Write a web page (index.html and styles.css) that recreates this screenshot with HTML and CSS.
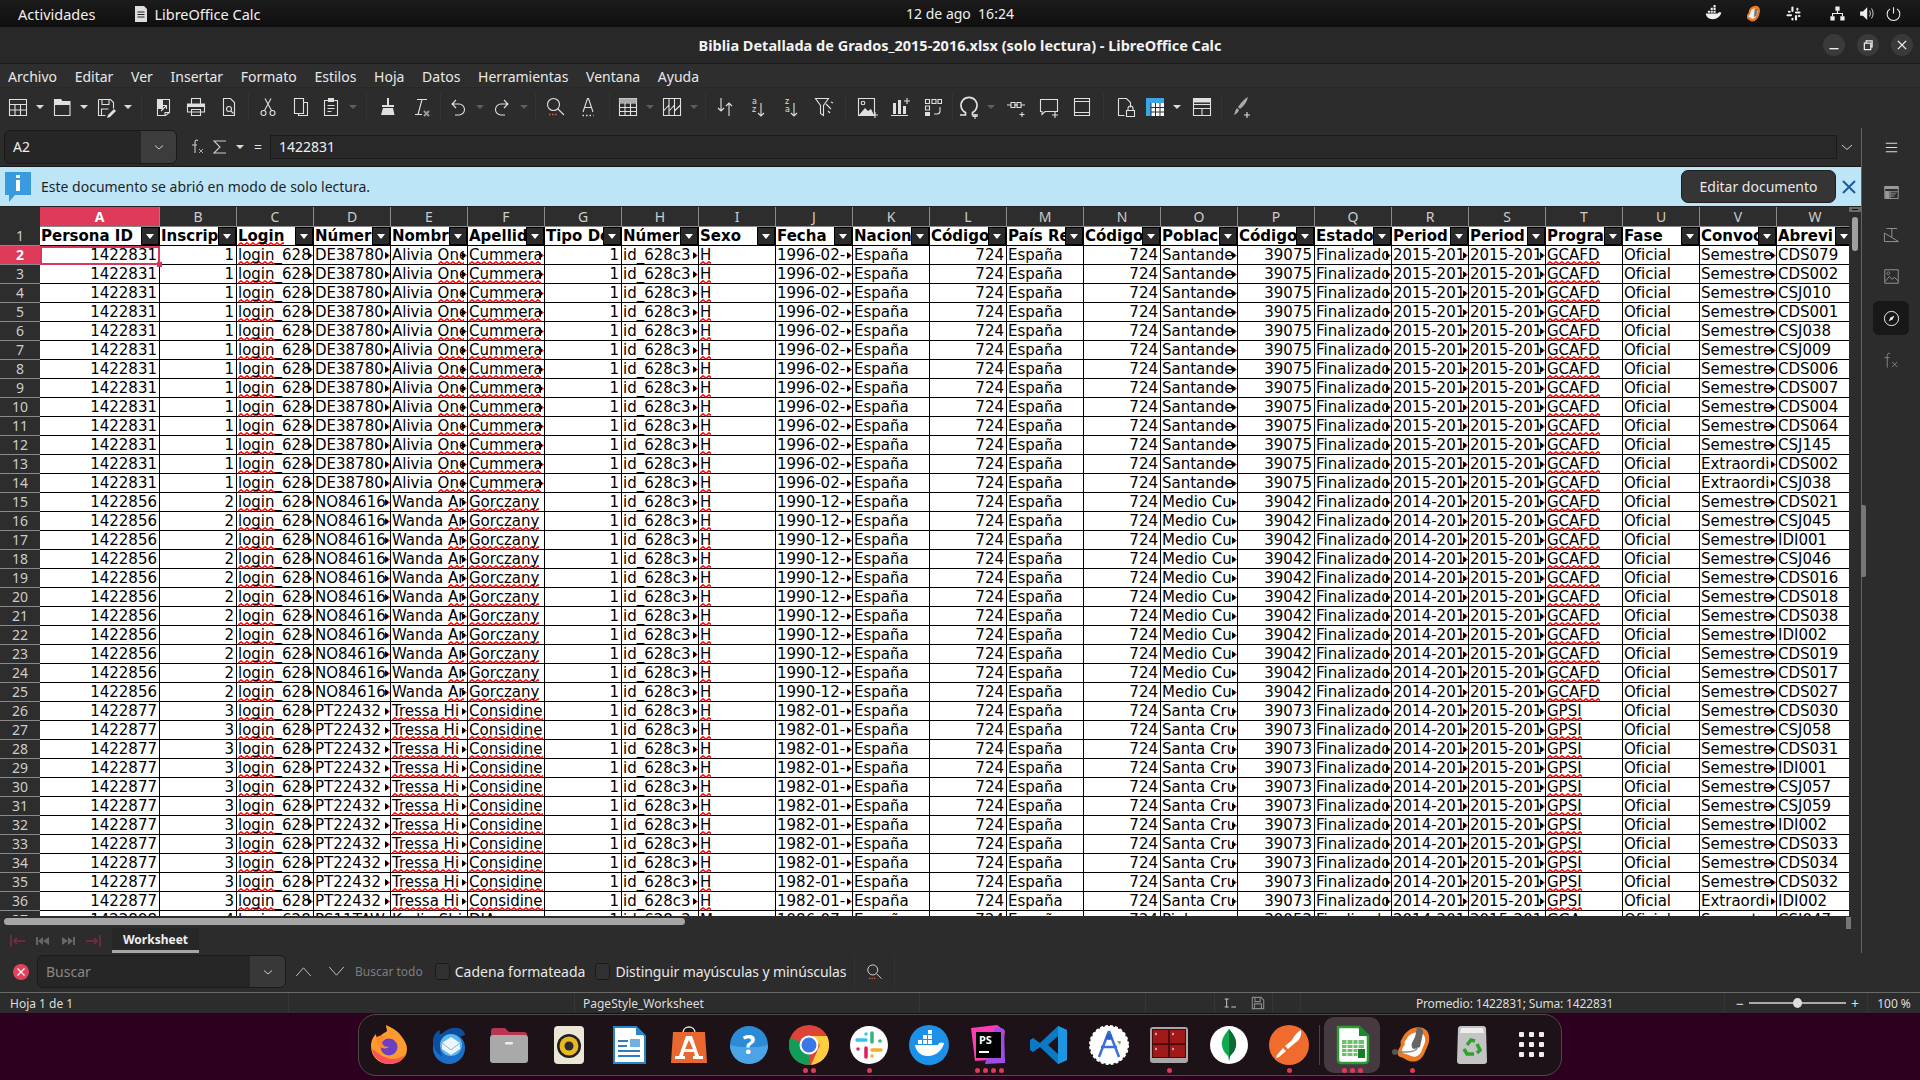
FILE: index.html
```html
<!DOCTYPE html>
<html lang="es">
<head>
    <meta charset="UTF-8">
    <title>Biblia Detallada de Grados_2015-2016.xlsx (solo lectura) - LibreOffice Calc</title>
    <link rel="stylesheet" href="styles.css">
</head>
<body>
    <!-- GNOME top bar -->
    <header class="topbar">
        <div class="top-left">
            <span class="activities">Actividades</span>
            <svg class="top-app-icon" viewBox="0 0 14 16"><path fill="#ddd" d="M1 0h9l3 3v13H1z"/><path stroke="#222" d="M3.5 6h7M3.5 8.5h7M3.5 11h7"/></svg>
            <span>LibreOffice Calc</span>
        </div>
        <div class="top-clock">12 de ago&nbsp; 16:24</div>
        <div class="tray">
            <svg class="t1" viewBox="0 0 24 24"><path fill="#eee" d="M1 12h17c1-2 3-2 5-1-1 5-6 9-12 9-6 0-9-3-10-8z"/><path fill="#eee" d="M4 8h3v3H4zM8 8h3v3H8zM12 8h3v3h-3zM8 4h3v3H8zM12 4h3v3h-3zM12 0h3v3h-3z"/></svg>
            <svg class="t2" viewBox="4 1 19 20"><path fill="#ee7b22" d="M12 3c5-3 10 0 9 6-1 4-1 7-5 10-3 2-5 2-7 0-2-1-4-2-3-4-1-3 2-4 2-6 0-3 2-5 4-6z"/><path fill="#eee" d="M12 6c3-2 7 0 6 4-1 3-1 5-3 6-2 2-4 1-5 0-2-1-3-1-2-3 2-1 2-3 2-4 0-1 1-2 2-3z"/><path fill="#777" d="M15 5l3 1-1 8-3 1z"/></svg>
            <svg class="t3" viewBox="0 0 24 24"><g fill="#eee"><rect x="9" y="2" width="3" height="8" rx="1.5"/><rect x="14" y="14" width="3" height="8" rx="1.5"/><rect x="14" y="9" width="8" height="3" rx="1.5"/><rect x="2" y="13" width="8" height="3" rx="1.5"/><rect x="4" y="8" width="4" height="3" rx="1.5"/><rect x="16" y="4" width="3" height="4" rx="1.5"/><rect x="9" y="18" width="3" height="4" rx="1.5"/><rect x="18" y="14" width="4" height="3" rx="1.5"/></g></svg>
            <svg class="t4" viewBox="0 0 24 24"><path fill="#eee" d="M9 2h6v6h-6zM2 16h6v6H2zM16 16h6v6h-6z"/><path fill="none" stroke="#eee" stroke-width="1.5" d="M12 8v4M5 16v-4h14v4"/></svg>
            <svg class="t5" viewBox="0 0 24 24"><path fill="#eee" d="M3 9h4l6-6v18l-6-6H3z"/><path fill="none" stroke="#bbb" stroke-width="1.5" d="M16 8c2 2 2 6 0 8M19 5c3 4 3 10 0 14"/></svg>
            <svg class="t6" viewBox="0 0 24 24"><path fill="none" stroke="#eee" stroke-width="1.5" d="M12 3v9M7 5.500a9 9 0 1 0 10 0"/></svg>
        </div>
    </header>

    <div class="window">
        <div class="titlebar">
            <span class="title">Biblia Detallada de Grados_2015-2016.xlsx (solo lectura) - LibreOffice Calc</span>
            <div class="win-btns">
                <span class="win-btn"><svg viewBox="0 0 24 24"><path stroke="#eee" stroke-width="1.5" d="M7 16h10"/></svg></span>
                <span class="win-btn"><svg viewBox="0 0 24 24"><path fill="none" stroke="#eee" stroke-width="1.300" d="M8 10h7v7H8zM10 10V7.500h6.500V14H15"/></svg></span>
                <span class="win-btn"><svg viewBox="0 0 24 24"><path stroke="#eee" stroke-width="1.500" d="M7.500 7.500l9 9M16.500 7.500l-9 9"/></svg></span>
            </div>
        </div>

        <nav class="menubar">
            <span>Archivo</span><span>Editar</span><span>Ver</span><span>Insertar</span><span>Formato</span><span>Estilos</span><span>Hoja</span><span>Datos</span><span>Herramientas</span><span>Ventana</span><span>Ayuda</span>
        </nav>

        <div class="toolbar">
            <span class="tb dd"><svg class="ic" viewBox="0 0 24 24"><path d="M3.500 4.500h17v16h-17zM3.500 9.500h17M3.500 15h17M9 9.500v11M14.500 9.500v11"/></svg></span><i class="arr"></i>
            <span class="tb dd"><svg class="ic" viewBox="0 0 24 24"><path d="M4.500 4.500h6l1.500 2h8v14h-15.500z"/><path class="f" d="M4 4h7l1.500 2.500H20V10H4z"/></svg></span><i class="arr"></i>
            <span class="tb dd"><svg class="ic" viewBox="0 0 24 24"><path d="M4.500 4.500h12l3 3v6M4.500 4.500v16h7M8 4.500v5h7v-5M7.500 20v-6h7"/><path class="f" d="M20 14l2 2-6 6-3 1 1-3z"/></svg></span><i class="arr"></i>
            <i class="sep"></i>
            <span class="tb"><svg class="ic" viewBox="0 0 24 24"><path d="M6.500 4.500h12v13l-4 3h-8z"/><path class="f" d="M6 4h6v10H6z"/><path d="M14 20.500v-3h4.500M10 16l5-5M12 10.500h3.500V14"/></svg></span>
            <span class="tb"><svg class="ic" viewBox="0 0 24 24"><path d="M7.500 9V3.500h9V9M3.500 9h17v8h-17zM7.500 14.500h9v6h-9z"/><path class="f" d="M3.500 9h17v3h-17z"/></svg></span>
            <span class="tb"><svg class="ic" viewBox="0 0 24 24"><path d="M6.500 3.500h7l4 4v13h-11z"/><circle cx="12" cy="14" r="2.500"/><path d="M14 16l2.500 2.500"/></svg></span>
            <i class="sep narrow"></i>
            <span class="tb"><svg class="ic" viewBox="0 0 24 24"><circle cx="7.500" cy="18" r="2.500"/><circle cx="16.500" cy="18" r="2.500"/><path d="M8.500 15.500L15 3.500M15.500 15.500L9 3.500"/></svg></span>
            <span class="tb"><svg class="ic" viewBox="0 0 24 24"><path d="M5.500 3.500h9v15h-9zM14.500 7.500h4v13h-9v-2"/></svg></span>
            <span class="tb dd"><svg class="ic" viewBox="0 0 24 24"><path d="M5.500 5.500h13v15h-13zM8.500 10.500h7M8.500 13.500h7M8.500 16.500h4"/><path class="f" d="M9 3h6v4H9z"/></svg></span><i class="arr off"></i>
            <i class="sep"></i>
            <span class="tb"><svg class="ic" viewBox="0 0 24 24"><path class="f" d="M11 3h2v7h5v2H6v-2h5zM7 13h10l1.500 7H5z"/></svg></span>
            <span class="tb"><svg class="ic" viewBox="0 0 24 24"><path d="M8 4.500h10M13 4.500l-4 15M6 19.500h7"/><path stroke="#999" stroke-width="2" d="M15 16l5 5M20 16l-5 5"/></svg></span>
            <i class="sep slim"></i>
            <span class="tb dd"><svg class="ic" viewBox="0 0 24 24"><path d="M10 5l-4 4 4 4M6 9h7a5.500 5.500 0 0 1 0 11H9"/></svg></span><i class="arr off"></i>
            <span class="tb dd"><svg class="ic" viewBox="0 0 24 24"><path d="M14 5l4 4-4 4M18 9h-7a5.500 5.500 0 0 0 0 11h4"/></svg></span><i class="arr off"></i>
            <i class="sep narrow"></i>
            <span class="tb"><svg class="ic" viewBox="0 0 24 24"><circle cx="10.500" cy="9.500" r="6"/><path d="M15 14l6 6"/><path stroke="#e8622a" stroke-width="1.500" stroke-dasharray="1.500 1.500" d="M6 19.500h9"/></svg></span>
            <span class="tb"><svg class="ic" viewBox="0 0 24 24"><path d="M7 17L11.500 3.500h1L17 17M8.500 12.500h7"/><path stroke-width="1.500" stroke-dasharray="1.500 2" d="M6.500 20.500h11"/></svg></span>
            <i class="sep"></i>
            <span class="tb dd"><svg class="ic" viewBox="0 0 24 24"><path d="M3.500 3.500h17v17h-17zM3.500 8h17M3.500 12.500h17M3.500 16.500h17M9 3.500v17M14.500 3.500v17"/><path class="f dim" d="M3.500 3.500h17V8h-17z"/></svg></span><i class="arr off"></i>
            <span class="tb dd"><svg class="ic" viewBox="0 0 24 24"><path d="M3.500 3.500h17v17h-17zM9 3.500v17M14.500 3.500v17M3.500 16l5.500-6M9 16l5.500-6M14.500 16l6-6"/></svg></span><i class="arr off"></i>
            <i class="sep narrow"></i>
            <span class="tb"><svg class="ic" viewBox="0 0 24 24"><path d="M8 3v13M5 13l3 3 3-3M16 21V8M13 11l3-3 3 3"/></svg></span>
            <span class="tb"><svg class="ic" viewBox="0 0 24 24"><text x="6" y="9" class="ic-txt">a</text><text x="6" y="17" class="ic-txt">z</text><path d="M15 8v13M12 18l3 3 3-3"/></svg></span>
            <span class="tb"><svg class="ic" viewBox="0 0 24 24"><text x="6" y="9" class="ic-txt">z</text><text x="6" y="17" class="ic-txt">a</text><path d="M15 8v13M12 18l3 3 3-3"/></svg></span>
            <span class="tb"><svg class="ic" viewBox="0 0 24 24"><path d="M3.500 3.500h13l-5 7v10l-3-2v-8zM14 9l5 5M19 7l2 1M16 16l2 2"/></svg></span>
            <i class="sep"></i>
            <span class="tb"><svg class="ic" viewBox="0 0 24 24"><path d="M3.500 3.500h16v17h-16z"/><circle cx="8" cy="8" r="1.800"/><path class="f" d="M4 20l6-7 3 3 3-2 3 6z"/><path d="M17 20h6M20 17v6"/></svg></span>
            <span class="tb"><svg class="ic" viewBox="0 0 24 24"><path class="f" d="M5 8h3v11H5zM10 5h3v14h-3zM15 11h3v8h-3z"/><path d="M3 20.500h17M19 3v6M16 6h6"/></svg></span>
            <span class="tb"><svg class="ic" viewBox="0 0 24 24"><path d="M4.500 4.500h4v4h-4zM11 4.500h4v4h-4zM17 4.500h3.500v4H17zM4.500 11h4v4h-4zM19 12v4a3 3 0 0 1-3 3h-3"/><path class="f" d="M4 17h5v4H4z"/></svg></span>
            <i class="sep narrow"></i>
            <span class="tb dd"><svg class="ic" viewBox="0 0 24 24"><path stroke-width="1.700" d="M3 20h5.500v-2.500a8 8 0 1 1 7 0V20H21"/><path d="M18 19v5M15.500 21.500h5"/></svg></span><i class="arr off"></i>
            <span class="tb"><svg class="ic" viewBox="0 0 24 24"><path d="M3 10h4M17 10h4M7 7.500h4v5H7zM13 7.500h4v5h-4zM10 10h4M18 17v5M15.500 19.500h5"/></svg></span>
            <span class="tb"><svg class="ic" viewBox="0 0 24 24"><path d="M3.500 4.500h17v12H8l-3 3v-3H3.500zM18 17v6M15 20h6"/></svg></span>
            <span class="tb"><svg class="ic" viewBox="0 0 24 24"><path d="M4.500 3.500h15v17h-15zM4.500 6.500h15M4.500 17.500h15"/></svg></span>
            <i class="sep"></i>
            <span class="tb"><svg class="ic" viewBox="0 0 24 24"><path d="M5.500 3.500h8l4 4v5M5.500 3.500v17h6"/><path d="M13.500 15.500h8v6h-8zM15 15.500v-2a2.500 2.500 0 0 1 5 0v2"/></svg></span>
            <span class="tb dd"><svg viewBox="0 0 24 24"><rect x="3" y="3" width="18" height="18" fill="#3aa5e6"/><path fill="#fff" d="M8 8h13v13H8z"/><path stroke="#2c2c2c" d="M8 8v13M12.500 8v13M17 8v13M8 12.500h13M8 17h13"/></svg></span><i class="arr"></i>
            <span class="tb"><svg class="ic" viewBox="0 0 24 24"><path d="M3.500 3.500h17v17h-17zM3.500 13.500h17M12 13.500v7"/><path class="f" d="M3.500 3.500h17v4h-17z"/><path d="M3.500 9.500h17"/></svg></span>
            <i class="sep narrow"></i>
            <span class="tb"><svg class="ic" viewBox="0 0 24 24"><path class="f dim" d="M19 2c-1 5-4 9-8 12l-2-2c3-4 6-8 10-10zM8 13l2 2c-1 3-3 4-5 5 1-2 1-5 3-7z"/><path d="M18 17v6M15 20h6"/></svg></span>
        </div>

        <div class="work">
            <div class="work-main">
                <div class="formulabar">
                    <div class="namebox">
                        <span class="namebox-val">A2</span>
                        <span class="namebox-arrow"><svg viewBox="0 0 12 12"><path fill="none" stroke="#ccc" d="M2 4.500l4 3.500 4-3.500"/></svg></span>
                    </div>
                    <svg class="fb-fx" viewBox="0 0 16 18"><path fill="none" stroke="#ccc" stroke-width="1.100" d="M8 2.500c-2-1-3 0-3 2V15M2 7h5"/><path stroke="#aaa" d="M9 11l4 4M13 11l-4 4"/></svg>
                    <svg class="fb-sum" viewBox="0 0 16 18"><path fill="none" stroke="#ccc" stroke-width="1.100" d="M14 3H2l6 6-6 6h12"/></svg>
                    <i class="arr fb-arr"></i>
                    <span class="fb-eq">=</span>
                    <div class="fb-input">1422831</div>
                    <svg class="fb-chev" viewBox="0 0 12 12"><path fill="none" stroke="#ccc" d="M1 4l5 4.500L11 4"/></svg>
                </div>

                <div class="infobar">
                    <svg class="info-icon" viewBox="0 0 26 30"><path fill="#3a9ae0" d="M0 0h26v23H10l-6 7v-7H0z"/><rect x="11" y="3" width="4" height="3" fill="#fff"/><rect x="11" y="8" width="4" height="11" fill="#fff"/></svg>
                    <span class="info-text">Este documento se abrió en modo de solo lectura.</span>
                    <button class="info-btn">Editar documento</button>
                    <svg class="info-close" viewBox="0 0 14 14"><path stroke="#1b5c9e" stroke-width="2" d="M1 1l12 12M13 1L1 13"/></svg>
                </div>

                <div class="sheet">
                    <div class="grid"><table id="sheet"></table></div>
                    <div class="vscroll">
                        <span class="v-split"></span>
                        <span class="v-thumb"></span>
                    </div>
                </div>

                <div class="hscroll">
                    <span class="h-thumb"></span>
                    <span class="h-split"></span>
                </div>

                <div class="tabsbar">
                    <div class="tab-nav">
                        <svg viewBox="0 0 18 12"><path fill="none" stroke="#7d2c3c" stroke-width="1.500" d="M2 0v12M16 6H5M8 3L5 6l3 3"/></svg>
                        <svg viewBox="0 0 18 12"><path fill="#666" d="M2 2v8h2V2zM9 2v8L4 6zM15 2v8l-6-4z"/></svg>
                        <svg viewBox="0 0 18 12"><path fill="#666" d="M16 2v8h-2V2zM9 2v8l5-4zM3 2v8l6-4z"/></svg>
                        <svg viewBox="0 0 18 12"><path fill="none" stroke="#7d2c3c" stroke-width="1.500" d="M16 0v12M2 6h11M10 3l3 3-3 3"/></svg>
                    </div>
                    <div class="tab">Worksheet</div>
                </div>
            </div>

            <aside class="sidebar">
                <span class="sb-item sb-menu"><svg viewBox="0 0 24 24"><path stroke="#eee" stroke-width="1.300" d="M4 6h16M4 12h16M4 18h16"/></svg></span>
                <span class="sb-item"><svg viewBox="0 0 24 24"><path fill="none" stroke="#999" stroke-width="1.300" d="M2.500 3.500h19v17h-19zM10 11h11M10 14h8M10 17h6M10 10v11"/><path fill="#999" d="M2 3h20v4H2zM3 10h6v10H3z"/></svg></span>
                <span class="sb-item"><svg viewBox="0 0 24 24"><path fill="none" stroke="#999" stroke-width="1.300" d="M5 3.500h15M12.500 3.500v12M2 22h20L2 10z"/></svg></span>
                <span class="sb-item"><svg viewBox="0 0 24 24"><path fill="none" stroke="#999" stroke-width="1.300" d="M2.500 2.500h19v19h-19zM3 19l6-7 4 4 3-3 5 5"/><circle cx="7.500" cy="7.500" r="2" fill="none" stroke="#999"/></svg></span>
                <span class="sb-item"><span class="sb-sel"><svg viewBox="0 0 24 24"><circle cx="12" cy="12" r="10" fill="none" stroke="#eee" stroke-width="1.400"/><path fill="#eee" d="M16 8l-2.500 5.500L8 16l2.500-5.500z"/></svg></span></span>
                <span class="sb-item"><svg viewBox="0 0 24 24"><path fill="none" stroke="#888" stroke-width="1.300" d="M10 2c-3-1-4 1-4 3v17M2 8h7"/><path stroke="#888" stroke-width="1.300" d="M13 14l7 7M20 14l-7 7"/></svg></span>
                <span class="sb-handle"></span>
            </aside>
        </div>

        <div class="findbar">
            <span class="find-close"><svg viewBox="0 0 16 16"><circle cx="8" cy="8" r="8" fill="#e0435c"/><path stroke="#fff" stroke-width="1.200" d="M4.500 4.500l7 7M11.500 4.500l-7 7"/></svg></span>
            <div class="find-box">
                <span class="find-val">Buscar</span>
                <span class="find-arrow"><svg viewBox="0 0 12 12"><path fill="none" stroke="#ccc" d="M2 4.500l4 3.500 4-3.500"/></svg></span>
            </div>
            <svg class="find-nav" viewBox="0 0 18 12"><path fill="none" stroke="#ccc" d="M1 11l8-9 8 9"/></svg>
            <svg class="find-nav" viewBox="0 0 18 12"><path fill="none" stroke="#ccc" d="M1 1l8 9 8-9"/></svg>
            <span class="find-all">Buscar todo</span>
            <label class="check"><i></i>Cadena formateada</label>
            <label class="check case"><i></i>Distinguir mayúsculas y minúsculas</label>
            <span class="find-go"><svg class="ic" viewBox="0 0 24 24"><circle cx="10.500" cy="9.500" r="6"/><path d="M15 14l6 6"/><path stroke="#e8622a" stroke-width="1.500" stroke-dasharray="1.500 1.500" d="M6 19.500h9"/></svg></span>
        </div>

        <footer class="statusbar">
            <span class="st-left">Hoja 1 de 1</span>
            <span></span>
            <span class="st-left">PageStyle_Worksheet</span>
            <span></span>
            <span></span>
            <span class="st-icons">
                <svg viewBox="0 0 24 16"><path fill="none" stroke="#ddd" stroke-width="1.300" d="M4 2h6M4 14h6M7 2v12M14 14h7"/></svg>
                <svg viewBox="0 0 16 16"><path fill="none" stroke="#888" stroke-width="1.300" d="M1.500 1.500h10l3 3v10h-13zM4.500 1.500v5h6v-5M4 14v-5h8v5"/></svg>
            </span>
            <span></span>
            <span class="st-center st-sum">Promedio: 1422831; Suma: 1422831</span>
            <span class="st-zoom"><b>−</b><span class="zoom-track"><i class="zoom-thumb"></i></span><b>+</b></span>
            <span class="st-center">100 %</span>
        </footer>
    </div>

    <!-- wallpaper and dock -->
    <div class="desktop">
        <div class="dock">
            <div class="dock-item"><svg viewBox="0 0 40 40"><path fill="#ff9a2e" d="M20 39C9 39 2 31 2 21c0-6 3-10 5-12 0 3 1 4 3 5 1-5 6-6 8-8 0-2-1-3-1-6 7 3 13 7 16 12 3 4 5 8 5 12 0 9-8 15-18 15z"/><path fill="#ff4f5e" d="M3 24c2 9 9 15 18 15 7 0 13-4 15-9-6 5-14 5-20 2-6-2-9-6-13-8z"/><circle cx="20" cy="22" r="8.500" fill="#6a3fc4"/><path fill="#ff8a2a" d="M7 13c3-3 8-3 12-1-5 0-6 3-6 6 1 3 4 4 7 4-4 3-10 1-12-3z"/></svg></div>
            <div class="dock-item"><svg viewBox="0 0 40 40"><circle cx="20" cy="23" r="16" fill="#1b6fc9"/><path fill="#0b4fa3" d="M4 18C3 10 8 6 11 5c-1 3 0 5 1 6 3-6 10-9 17-8 4 1 7 4 7 7l-6 2C24 9 15 12 12 18c-2 5-1 10 2 13-5-1-9-6-10-13z"/><circle cx="22" cy="20" r="11" fill="#5cb6f0"/><path fill="#eef6fc" d="M13 18l9-6 9 6v6l-9 6-9-6z"/><path fill="none" stroke="#7fb7e0" d="M13 18l9 7 9-7"/></svg></div>
            <div class="dock-item"><svg viewBox="0 0 40 40"><path fill="#b83452" d="M2 6a3 3 0 0 1 3-3h11l4 4h15a3 3 0 0 1 3 3v8H2z"/><rect x="1" y="10" width="38" height="28" rx="3" fill="#a9a9a9"/><rect x="16" y="17" width="8" height="2.500" rx="1" fill="#eee"/></svg></div>
            <div class="dock-item"><svg viewBox="0 0 40 40"><rect x="5" y="1" width="30" height="38" rx="4" fill="#ebe6d6"/><circle cx="20" cy="21" r="12" fill="#1f1f1f"/><circle cx="20" cy="21" r="9.500" fill="#e8b824"/><circle cx="20" cy="21" r="4.500" fill="#2a2a2a"/></svg></div>
            <div class="dock-item"><svg viewBox="0 0 40 40"><path fill="#fff" stroke="#2787c9" stroke-width="2" d="M5 2h22l9 9v27H5z"/><path fill="#2787c9" d="M27 1l9 9h-9z"/><path fill="#2d7fc0" d="M9 15h10v2H9zM9 20h9v2H9zM9 25h22v2H9zM9 30h22v2H9z"/><rect x="21" y="14" width="10" height="8" fill="#6fb1e3"/></svg></div>
            <div class="dock-item"><svg viewBox="0 0 40 40"><path fill="none" stroke="#e8e0d4" stroke-width="1.500" d="M14 8c0-8 12-8 12 0"/><path fill="#e9682f" d="M4 7h32l2 31H2z"/><path fill="#fff" d="M17 11h6l7 20h4v3H24v-3h2l-1-4H15l-1 4h2v3H6v-3h4zM20 15l-4 9h8z"/></svg></div>
            <div class="dock-item"><svg viewBox="0 0 40 40"><circle cx="20" cy="20" r="19" fill="#2c8bd6"/><path fill="#4aa4e6" d="M1 20a19 19 0 0 0 38 0c-8 3-28 3-38 0z"/><text x="20" y="29" class="dock-q">?</text></svg></div>
            <div class="dock-item"><svg viewBox="0 0 40 40"><circle cx="20" cy="20" r="20" fill="#db4437"/><path fill="#0f9d58" d="M20 20L9.800 37.300A20 20 0 0 1 1 13z"/><path fill="#0f9d58" d="M20 40a20 20 0 0 1-10.200-2.700L20 20z"/><path fill="#ffcd40" d="M20 11h18a20 20 0 0 1-16 28.900L31 20z"/><circle cx="20" cy="20" r="9.500" fill="#fff"/><circle cx="20" cy="20" r="7.500" fill="#3b78e7"/></svg><span class="dots"><i></i><i></i></span></div>
            <div class="dock-item"><svg viewBox="0 0 40 40"><circle cx="20" cy="20" r="19" fill="#fff"/><g stroke-width="3.500" stroke-linecap="round"><path stroke="#36c5f0" d="M8 15h9M17 9v0"/><path stroke="#2eb67d" d="M23 8v9M31 16v0"/><path stroke="#ecb22e" d="M32 25h-9M23 31v0"/><path stroke="#e01e5a" d="M17 32v-9M9 24v0"/></g></svg><span class="dots"><i></i></span></div>
            <div class="dock-item"><svg viewBox="0 0 40 40"><circle cx="20" cy="20" r="20" fill="#1d91e8"/><path fill="#fff" d="M6 20h23c1-3 3-3 6-2-1 6-7 13-16 13-8 0-12-5-13-11z"/><path fill="#fff" d="M9 15h4v4H9zM14 15h4v4h-4zM19 15h4v4h-4zM14 10h4v4h-4zM19 10h4v4h-4zM19 5h4v4h-4z"/></svg></div>
            <div class="dock-item"><svg viewBox="0 0 40 40"><path fill="#ff3cb4" d="M2 3l26-3 8 6-4 28-26 2z"/><path fill="#9f4de8" d="M26 2l9 2 1 34-20 1z"/><rect x="7" y="7" width="25" height="26" fill="#000"/><text x="10" y="19" class="dock-ps">PS</text><rect x="10" y="26" width="10" height="2" fill="#fff"/></svg><span class="dots"><i></i><i></i><i></i><i></i></span></div>
            <div class="dock-item"><svg viewBox="0 0 40 40"><path fill="#0b79c4" d="M29 1l9 4v30l-9 4L11 22l-7 5-3-2v-10l3-2 7 5z"/><path fill="#1d95e2" d="M29 1l9 4v30l-9 4z"/><path fill="#1d1218" d="M29 11v18l-10-9z"/></svg></div>
            <div class="dock-item"><svg viewBox="0 0 40 40"><circle cx="20" cy="20" r="19" fill="#fff" stroke="#fff" stroke-width="2" stroke-dasharray="3 2"/><path fill="none" stroke="#3a6fe0" stroke-width="2.500" d="M20 6L10 32M20 6l10 26M12 22h16"/><circle cx="20" cy="12" r="3" fill="#2c5fc8"/><path fill="#68b44a" d="M28 16h4l-1 4z"/></svg></div>
            <div class="dock-item"><svg viewBox="0 0 40 40"><rect x="1" y="2" width="38" height="36" rx="3" fill="#a7a7a7"/><rect x="3" y="4" width="34" height="29" fill="#4a0a0a"/><path fill="#a01818" d="M4 5h15v13H4zM21 5h15v13H21zM4 20h15v12H4zM21 20h15v12H21z"/><path stroke="#f3c6c6" d="M6 8l2 1-2 1M23 8l2 1-2 1M6 23l2 1-2 1M23 23l2 1-2 1"/></svg><span class="dots"><i></i></span></div>
            <div class="dock-item"><svg viewBox="0 0 40 40"><circle cx="20" cy="20" r="19" fill="#fff"/><path fill="#10aa50" d="M20 4c5 6 8 11 7 17-1 5-4 8-6 10l-1 5-1-5c-2-2-5-5-6-10-1-6 2-11 7-17z"/><path fill="#0b6b35" d="M20 4v32l1-5c2-2 5-5 6-10 1-6-2-11-7-17z"/></svg></div>
            <div class="dock-item"><svg viewBox="0 0 40 40"><circle cx="20" cy="20" r="20" fill="#ef6c2e"/><path fill="#fff" d="M32 5c1 5-1 10-6 13l-7 6-3-3 7-6c3-5 5-8 9-10zM14 23l3 3-7 6-3 1 1-3z"/></svg><span class="dots"><i></i></span></div>
            <i class="dock-sep"></i>
            <div class="dock-item active"><svg viewBox="0 0 40 40"><path fill="#fff" stroke="#2c9c34" stroke-width="2.500" d="M6 2h21l9 9v24a3 3 0 0 1-3 3H9a3 3 0 0 1-3-3z"/><path fill="#1a8a2c" d="M27 0l11 11H27z"/><path fill="#6cc06c" d="M10 15h22v16H10z"/><path stroke="#fff" d="M10 19.500h22M10 23.500h22M10 27.500h22M15 15v16M21 15v16M26 15v16"/><path fill="#187c28" d="M26 24h7v9h-7z"/></svg><span class="dots"><i></i><i></i><i></i></span></div>
            <div class="dock-item"><svg viewBox="0 0 40 40"><path fill="#ee7b22" d="M16 6c7-6 20-5 21 5 1 7-2 11-4 16-3 8-9 11-16 9-3-1-6-4-9-4-4-2-2-8 0-10 2-3-1-5 2-8 1-3 3-6 6-8z"/><path fill="#fff" d="M18 10c5-4 14-4 15 3 1 5-2 8-3 12-2 6-7 8-11 6-2-1-5-2-8-3-2-1-1-5 1-7 2-3-1-4 2-6 1-2 2-4 4-5z"/><path fill="#666" d="M25 3c4-1 7 2 6 5l-3 14-6 2c-3-1-3-5-1-8l2-4z"/><path fill="none" stroke="#888" stroke-width="1.500" d="M3 27h12c5 0 9-1 11-5"/><circle cx="3" cy="27" r="3" fill="#555"/></svg><span class="dots"><i></i></span></div>
            <div class="dock-item"><svg viewBox="0 0 40 40"><path fill="#c4c4c4" d="M6 3a3 3 0 0 1 3-2h22a3 3 0 0 1 3 2l1 33a3 3 0 0 1-3 3H8a3 3 0 0 1-3-3z"/><path fill="#eee" d="M9 3h22l1 5H8z"/><path fill="none" stroke="#2ea12f" stroke-width="3.500" d="M15 20l4-5 4 1M25 19l3 6-3 3M22 29h-7l-3-5"/></svg></div>
            <div class="dock-item"><svg class="dock-apps" viewBox="0 0 28 28"><g fill="#eee"><rect x="1" y="1" width="5" height="5" rx="1"/><rect x="11" y="1" width="5" height="5" rx="1"/><rect x="21" y="1" width="5" height="5" rx="1"/><rect x="1" y="11" width="5" height="5" rx="1"/><rect x="11" y="11" width="5" height="5" rx="1"/><rect x="21" y="11" width="5" height="5" rx="1"/><rect x="1" y="21" width="5" height="5" rx="1"/><rect x="11" y="21" width="5" height="5" rx="1"/><rect x="21" y="21" width="5" height="5" rx="1"/></g></svg></div>
        </div>
    </div>

    <script src="script.js"></script>
</body>
</html>
```

FILE: styles.css
```css
* { box-sizing: border-box; }
html, body { margin: 0; height: 100%; }
body { width: 1920px; height: 1080px; overflow: hidden; display: flex; flex-direction: column; font-family: "Noto Sans", sans-serif; font-size: 14px; color: #e4e4e4; background: #2c001e; }
svg { display: block; }

/* top bar */
.topbar { height: 27px; flex: none; display: grid; grid-template-columns: 1fr auto 1fr; align-items: center; background: linear-gradient(#1b1b1b, #0f0f0f); font-size: 14px; color: #f0f0f0; }
.top-left { display: flex; align-items: center; font-size: 14.5px; }
.activities { margin: 0 39px 0 18px; }
.top-app-icon { width: 14px; height: 16px; margin-right: 6px; }
.top-clock { text-align: center; }
.tray { position: relative; height: 27px; }
.tray svg { position: absolute; top: 5px; width: 17px; height: 17px; }
.tray .t1 { right: 198px; }
.tray .t2 { right: 158px; }
.tray .t3 { right: 118px; }
.tray .t4 { right: 74px; }
.tray .t5 { right: 45px; }
.tray .t6 { right: 18px; }

.window { flex: none; background: #2c2c2c; }

/* title bar */
.titlebar { height: 37px; display: flex; align-items: center; justify-content: center; position: relative; background: #282828; border-bottom: 1px solid #1a1a1a; }
.title { font-weight: 700; font-size: 14.5px; color: #f2f2f2; }
.win-btns { position: absolute; right: 7px; top: 7px; display: flex; gap: 12px; }
.win-btn { width: 22px; height: 22px; border-radius: 50%; background: #3a3a3a; }

/* menu */
.menubar { height: 24px; display: flex; align-items: center; padding: 1px 0 0 8px; gap: 17.7px; background: #2e2e2e; border-bottom: 1px solid #282828; color: #e8e8e8; }

/* toolbar */
.toolbar { height: 40px; display: flex; align-items: center; padding: 0 0 2px 4px; background: #2c2c2c; }
.tb { width: 33px; height: 26px; display: flex; align-items: center; justify-content: center; flex: none; }
.tb.dd { width: 28px; }
.tb svg { width: 24px; height: 24px; }
.ic { fill: none; stroke: #e0e0e0; stroke-width: 1.100; }
.ic .f { fill: #e0e0e0; stroke: none; }
.ic .f.dim { fill: #aaa; }
.ic-txt { font-family: "DejaVu Sans", sans-serif; font-size: 8px; fill: #ddd; stroke: none; }
.arr { width: 16px; height: 4px; flex: none; position: relative; }
.arr::after { content: ""; display: block; margin: 0 auto; width: 0; height: 0; border-left: 4px solid transparent; border-right: 4px solid transparent; border-top: 4px solid #ddd; }
.arr.off::after { border-top-color: #5e5e5e; }
.sep { width: 10px; height: 30px; flex: none; background: linear-gradient(#333, #333) center / 1px 100% no-repeat; }
.sep.narrow { width: 6px; }
.sep.slim { width: 7px; }

/* work area with the sidebar on the right */
.work { display: flex; height: 825px; }
.work-main { width: 1861px; display: flex; flex-direction: column; }

.formulabar { height: 39px; display: flex; align-items: center; padding-left: 4px; padding-bottom: 1px; border-bottom: 1px solid #181818; }
.namebox { width: 173px; height: 34px; display: flex; background: #262626; border: 1px solid #191919; border-radius: 6px; overflow: hidden; flex: none; }
.namebox-val { flex: 1; padding-left: 8px; line-height: 32px; color: #eee; }
.namebox-arrow { width: 35px; display: flex; align-items: center; justify-content: center; background: #3c3c3c; }
.namebox-arrow svg { width: 12px; height: 12px; }
.fb-fx { width: 16px; height: 18px; margin-left: 13px; }
.fb-sum { width: 16px; height: 18px; margin-left: 6px; }
.fb-arr { width: 12px; margin-left: 6px; }
.fb-eq { width: 12px; margin-left: 6px; text-align: center; }
.fb-input { width: 1567px; height: 24px; margin-left: 6px; padding-left: 8px; line-height: 22px; background: #282828; border: 1px solid #1b1b1b; color: #eee; flex: none; }
.fb-chev { width: 12px; height: 12px; margin-left: 4px; }

.infobar { height: 40px; display: flex; align-items: center; background: #bce5f7; border-bottom: 1px solid #242424; color: #1f1f1f; }
.info-icon { width: 26px; height: 30px; margin: 0 10px 0 5px; flex: none; }
.info-text { flex: 1; }
.info-btn { width: 155px; height: 33px; font: inherit; color: #e8e8e8; background: #353535; border: 1px solid #1f1f1f; border-radius: 7px; }
.info-close { width: 14px; height: 14px; margin: 0 5px 0 6px; }

/* spreadsheet */
.sheet { height: 709px; display: flex; overflow: hidden; }
.grid { width: 1849px; overflow: hidden; background: #2c2c2c; }
#sheet { border-collapse: separate; border-spacing: 0; table-layout: fixed; width: 1854px; font-family: "DejaVu Sans", sans-serif; font-size: 15px; color: #000; }
#sheet th, #sheet td { white-space: nowrap; padding: 0; }
#sheet .corner { width: 40px; height: 20px; line-height: 18px; background: #2d2d2d; }
#sheet .col-a { width: 120px; }
#sheet .col { width: 77px; }
.col-head { height: 20px; background: #2d2d2d; color: #ccc; font: 400 14px/19px "Noto Sans", sans-serif; border-right: 1px solid #8a8a8a; border-bottom: 1px solid #8a8a8a; text-align: center; overflow: hidden; }
.row-head { height: 19px; background: #2d2d2d; color: #ccc; font: 400 14px/18px "Noto Sans", sans-serif; border-bottom: 1px solid #8a8a8a; text-align: center; overflow: hidden; }
.col-head.on, .row-head.on { background: #df3a5a; color: #fff; font-weight: 700; }

.cell { height: 19px; line-height: 18px; background: #fff; border-right: 1px solid #000; border-bottom: 1px solid #000; position: relative; }
.txt { display: block; height: 18px; overflow-x: clip; padding: 0 1px; }
.cell.num .txt { text-align: right; padding-right: 2px; }
.cell.more .txt { margin-right: 3px; padding-right: 0; }
.cell.more::after { content: ""; position: absolute; right: 0; top: 6px; width: 5px; height: 7px; background: linear-gradient(to right, #000 60%, #f00 60%); clip-path: polygon(0 0, 100% 50%, 0 100%); }
.head { font-weight: 700; }
.head .txt { margin-right: 17px; padding-right: 0; }
.filter { position: absolute; right: 0; top: 0; width: 18px; height: 18px; background: #2b2b2b; border: 1px solid #000; }
.filter::after { content: ""; position: absolute; left: 4px; top: 6px; border-left: 4px solid transparent; border-right: 4px solid transparent; border-top: 5px solid #fff; }
/* spell-check squiggle, drawn as a repeating zigzag under the word */
.sp { padding-bottom: 1px; background: url("data:image/svg+xml,%3Csvg xmlns='http://www.w3.org/2000/svg' width='6' height='4'%3E%3Cpath d='M0 3.200L3 .8L6 3.200' fill='none' stroke='%23f11' stroke-width='1.600'/%3E%3C/svg%3E") repeat-x left bottom; }
.cell.current { outline: 2px solid #d8365a; outline-offset: -2px; }
.grip { position: absolute; right: -3px; bottom: -3px; width: 5px; height: 5px; background: #d8365a; z-index: 2; }

.vscroll { width: 12px; position: relative; background: #2c2c2c; }
.v-split { position: absolute; left: 0; top: 0; width: 12px; height: 5px; background: #6a6a6a; }
.v-split::after { content: ""; position: absolute; left: 3px; top: 2px; width: 6px; height: 1px; background: #111; }
.v-thumb { position: absolute; left: 3px; top: 10px; width: 6px; height: 34px; border-radius: 3px; background: #a0a0a0; }

.hscroll { height: 9px; display: flex; position: relative; padding: 2px 0 0 4px; }
.h-thumb { width: 681px; height: 7px; border-radius: 4px; background: #a6a6a6; }
.h-split { position: absolute; left: 1846px; top: 1px; width: 5px; height: 12px; background: #777; }

.tabsbar { height: 28px; display: flex; align-items: flex-start; padding-top: 3px; }
.tab-nav { width: 112px; height: 25px; display: flex; align-items: center; padding-left: 9px; gap: 7px; }
.tab-nav svg { width: 18px; height: 12px; }
.tab { width: 87px; height: 25px; padding-top: 3px; text-align: center; font-weight: 700; font-size: 12px; background: #272727; border-bottom: 3px solid #a6a6a6; color: #eee; }

/* right sidebar */
.sidebar { width: 59px; position: relative; display: flex; flex-direction: column; align-items: center; border-left: 1px solid #636363; background: #2c2c2c; }
.sb-item { height: 42px; display: flex; align-items: center; justify-content: center; flex: none; }
.sb-item svg { width: 17px; height: 17px; }
.sb-menu { height: 38px; margin-bottom: 5px; }
.sb-sel { width: 36px; height: 34px; border-radius: 6px; background: #181818; display: flex; align-items: center; justify-content: center; }
.sb-handle { position: absolute; left: -1px; top: 377px; width: 5px; height: 72px; background: #777; border-radius: 0 2px 2px 0; }

/* find bar */
.findbar { height: 40px; display: flex; align-items: center; padding-bottom: 2px; border-bottom: 1px solid #6a6a6a; }
.find-close { width: 16px; margin: 0 8px 0 13px; flex: none; }
.find-box { width: 249px; height: 33px; display: flex; background: #262626; border: 1px solid #1b1b1b; border-radius: 6px; overflow: hidden; flex: none; }
.find-val { flex: 1; padding-left: 8px; line-height: 31px; color: #888; }
.find-arrow { width: 35px; display: flex; align-items: center; justify-content: center; background: #383838; }
.find-arrow svg { width: 12px; height: 12px; }
.find-nav { width: 17px; height: 11px; margin-left: 9px; margin-right: 7px; }
.find-all { font-size: 12px; color: #7d7d7d; margin: 0 12px 0 3px; }
.check { display: flex; align-items: center; gap: 5px; margin-right: 10px; color: #e8e8e8; }
.check.case { margin-right: 7px; letter-spacing: -0.08px; }
.check i { width: 15px; height: 17px; background: #313131; border: 1px solid #1a1a1a; border-radius: 3px; }
.find-go { width: 41px; height: 36px; display: flex; align-items: center; justify-content: center; border-left: 1px solid #333; border-right: 1px solid #333; }
.find-go svg { width: 20px; height: 20px; }

/* status bar */
.statusbar { height: 20px; display: grid; grid-template-columns: 289px 286px 345px 226px 69px 58px 28px 424px 143px 52px; align-items: center; font-size: 12px; background: #2c2c2c; color: #ddd; }
.statusbar > span { height: 20px; line-height: 21px; border-right: 1px solid #363636; }
.statusbar > span:last-child { border-right: none; }
.st-left { padding-left: 10px; }
.statusbar > .st-left:nth-child(3) { padding-left: 8px; }
.st-center { text-align: center; }
.st-sum { padding-left: 4px; letter-spacing: -0.15px; }
.st-icons { display: flex; align-items: center; gap: 12px; padding-left: 7px; }
.st-icons svg { height: 14px; width: 16px; }
.st-zoom { display: flex; align-items: center; gap: 5px; padding-left: 11px; }
.st-zoom b { font-weight: 400; font-size: 14px; }
.zoom-track { width: 97px; height: 2px; background: #aaa; position: relative; }
.zoom-thumb { position: absolute; left: 44px; top: -4px; width: 9px; height: 10px; border-radius: 50%; background: #ddd; }

/* desktop */
.desktop { flex: 1; display: flex; justify-content: center; align-items: flex-start; background: #2c001e; }
.dock { width: 1204px; height: 62px; margin-top: 1px; display: flex; align-items: center; padding: 0; background: #1d1218; border: 1px solid #4e4a4c; border-radius: 18px; }
.dock-item { width: 60px; height: 56px; flex: none; position: relative; display: flex; align-items: center; justify-content: center; }
.dock-item > svg { width: 40px; height: 40px; }
.dock-item > svg.dock-apps { width: 28px; height: 28px; }
.dock-item.active { background: #46393f; border-radius: 10px; width: 56px; margin: 0 2px 0 3px; }
.dock-sep { width: 1px; height: 40px; background: #4a4346; margin-right: 1px; flex: none; }
.dots { position: absolute; left: 0; right: 0; bottom: 0; display: flex; justify-content: center; gap: 3px; }
.dots i { width: 5px; height: 5px; border-radius: 50%; background: #e0395a; }
.dock-q { font: 700 26px "Noto Sans", sans-serif; fill: #fff; text-anchor: middle; }
.dock-ps { font: 700 11px "Noto Sans", sans-serif; fill: #fff; }
```

FILE: script.js
```js
// Three people, each with a block of enrolment rows, then the one cut off at the bottom
const people = [
    {
        id: 1422831, n: 1, login: "login", doc: "DE38780", name: ["Alivia ", "One"], last: "Cummera", lastMore: true,
        birth: "1996-02-", city: "Santande", zip: 39075, from: "2015-201", prog: "GCAFD",
        codes: ["CDS079", "CDS002", "CSJ010", "CDS001", "CSJ038", "CSJ009", "CDS006", "CDS007", "CDS004", "CDS064", "CSJ145", "CDS002", "CSJ038"],
        extra: [11, 12]
    },
    {
        id: 1422856, n: 2, login: "login", doc: "NO84616", name: ["Wanda ", "Ar"], last: "Gorczany", lastMore: false,
        birth: "1990-12-", city: "Medio Cu", zip: 39042, from: "2014-201", prog: "GCAFD",
        codes: ["CDS021", "CSJ045", "IDI001", "CSJ046", "CDS016", "CDS018", "CDS038", "IDI002", "CDS019", "CDS017", "CDS027"],
        extra: []
    },
    {
        id: 1422877, n: 3, login: "login", doc: "PT22432", name: ["", "Tressa Hi"], last: "Considine", lastMore: false,
        birth: "1982-01-", city: "Santa Cru", zip: 39073, from: "2014-201", prog: "GPSI",
        codes: ["CDS030", "CSJ058", "CDS031", "IDI001", "CSJ057", "CSJ059", "IDI002", "CDS033", "CDS034", "CDS032", "IDI002"],
        extra: [10]
    },
    {
        id: 1422898, n: 4, login: "login", doc: "PS11TAW", name: ["Kadin ", "Shi"], last: "DIA", lastMore: false, sex: "M",
        birth: "1986-07-", city: "Piel", zip: 39052, from: "2014-201", prog: "GGA",
        codes: ["CSJ047"],
        extra: []
    }
];

const letters = "ABCDEFGHIJKLMNOPQRSTUVW".split("");
const headers = ["Persona ID", "Inscrip", "Login", "Númer", "Nombr", "Apellid", "Tipo Do", "Númer", "Sexo", "Fecha", "Nacion", "Código", "País Re", "Código", "Poblac", "Código", "Estado", "Period", "Period", "Progra", "Fase", "Convoc", "Abrevi"];

function cell(html, cls) {
    return `<td class="cell ${cls || ""}"><span class="txt">${html}</span></td>`;
}

function spell(text) {
    return `<span class="sp">${text}</span>`;
}

function renderHead() {
    let html = '<tr><th class="corner"></th>';
    letters.forEach((l, i) => {
        html += `<th class="col-head ${i === 0 ? "on col-a" : "col"}">${l}</th>`;
    });
    html += '</tr><tr><th class="row-head">1</th>';
    headers.forEach(h => {
        const label = h === "Login" ? spell(h) : h;
        html += `<td class="cell head"><span class="txt">${label}</span><span class="filter"></span></td>`;
    });
    return html + "</tr>";
}

function renderRow(rowNum, p, i) {
    const current = rowNum === 2;
    const call = p.extra.includes(i) ? "Extraordi" : "Semestre";
    let html = `<tr><th class="row-head ${current ? "on" : ""}">${rowNum}</th>`;
    html += current
        ? `<td class="cell num current"><span class="txt">${p.id}</span><span class="grip"></span></td>`
        : cell(p.id, "num");
    html += cell(p.n, "num");
    html += cell(spell(p.login) + "_628", "more");
    html += cell(p.doc, "more");
    html += cell(p.name[0] + spell(p.name[1]), "more");
    html += cell(spell(p.last), p.lastMore ? "more" : "");
    html += cell(1, "num");
    html += cell("id_628c3", "more");
    html += cell(spell(p.sex || "H"));
    html += cell(p.birth, "more");
    html += cell("España");
    html += cell(724, "num");
    html += cell("España");
    html += cell(724, "num");
    html += cell(p.city, "more");
    html += cell(p.zip, "num");
    html += cell("Finalizado", "more");
    html += cell(p.from, "more");
    html += cell("2015-201", "more");
    html += cell(spell(p.prog));
    html += cell("Oficial");
    html += cell(call, "more");
    html += cell(p.codes[i]);
    return html + "</tr>";
}

function renderSheet() {
    let html = renderHead();
    let rowNum = 2;
    people.forEach(p => {
        p.codes.forEach((code, i) => {
            html += renderRow(rowNum, p, i);
            rowNum += 1;
        });
    });
    document.getElementById("sheet").innerHTML = html;
}

renderSheet();
```
